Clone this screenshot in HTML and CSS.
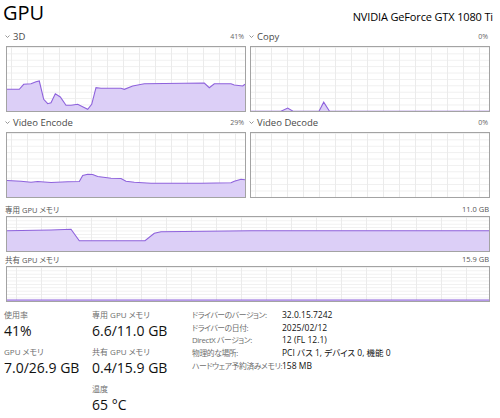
FILE: index.html
```html
<!DOCTYPE html>
<html lang="ja">
<head>
<meta charset="utf-8">
<title>GPU</title>
<link rel="stylesheet" href="styles.css">
</head>
<body>
<div class="page">
  <header class="top">
    <h1 class="title">GPU</h1>
    <div class="model">NVIDIA GeForce GTX 1080 Ti</div>
  </header>

  <div class="quad">
    <div class="cell">
      <div class="cell-head">
        <span class="name"><svg class="chev" width="5" height="3" viewBox="0 0 5 3"><polyline points="0.5,0.5 2.5,2.5 4.5,0.5" fill="none" stroke="#8a8a8a" stroke-width="0.9"/></svg>3D</span>
        <span class="pct">41%</span>
      </div>
      <div class="chart">
        <svg viewBox="0 0 238 64" preserveAspectRatio="none">
          <polygon class="area" points="0,42.3 12.3,42.3 16.7,37.3 24,36.7 29,34.7 32.3,34 36.7,52.3 40.7,56.7 44,55.7 48.3,46.7 53.3,50 59,58.3 64,58.3 70.7,57.3 80.7,62.3 84.7,57.3 89,40.7 94,41.3 114,41.3 117.3,42.3 125.7,39 137.3,36.7 197.3,36 202.3,40.7 207.3,36.7 224,36.7 227.3,38 235.7,39 238,37.3 238,64 0,64"/>
          <polyline class="line" points="0,42.3 12.3,42.3 16.7,37.3 24,36.7 29,34.7 32.3,34 36.7,52.3 40.7,56.7 44,55.7 48.3,46.7 53.3,50 59,58.3 64,58.3 70.7,57.3 80.7,62.3 84.7,57.3 89,40.7 94,41.3 114,41.3 117.3,42.3 125.7,39 137.3,36.7 197.3,36 202.3,40.7 207.3,36.7 224,36.7 227.3,38 235.7,39 238,37.3"/>
        </svg>
      </div>
    </div>
    <div class="cell">
      <div class="cell-head">
        <span class="name"><svg class="chev" width="5" height="3" viewBox="0 0 5 3"><polyline points="0.5,0.5 2.5,2.5 4.5,0.5" fill="none" stroke="#8a8a8a" stroke-width="0.9"/></svg>Copy</span>
        <span class="pct">0%</span>
      </div>
      <div class="chart">
        <svg viewBox="0 0 238 64" preserveAspectRatio="none">
          <polygon class="area" points="0,64 30,64 36.7,61 42,64 68,64 72.7,55.2 78.5,64 238,64"/>
          <polyline class="line" points="0,64.2 30,64.2 36.7,61 42,64.2 68,64.2 72.7,55.2 78.5,64.2 238,64.2"/>
        </svg>
      </div>
    </div>
    <div class="cell">
      <div class="cell-head">
        <span class="name"><svg class="chev" width="5" height="3" viewBox="0 0 5 3"><polyline points="0.5,0.5 2.5,2.5 4.5,0.5" fill="none" stroke="#8a8a8a" stroke-width="0.9"/></svg>Video Encode</span>
        <span class="pct">29%</span>
      </div>
      <div class="chart">
        <svg viewBox="0 0 238 64" preserveAspectRatio="none">
          <polygon class="area" points="0,47.5 14,48.2 24,49.2 30.7,48.5 44,49.5 60.7,48.8 72.3,48.5 75.7,42.5 80.7,41.2 85.7,41.5 90.7,43.5 104,45.2 114,45.5 119,48.2 127.3,49.2 144,50.2 194,50.2 224,49.8 227.3,48.2 234,46.2 238,46.8 238,64 0,64"/>
          <polyline class="line" points="0,47.5 14,48.2 24,49.2 30.7,48.5 44,49.5 60.7,48.8 72.3,48.5 75.7,42.5 80.7,41.2 85.7,41.5 90.7,43.5 104,45.2 114,45.5 119,48.2 127.3,49.2 144,50.2 194,50.2 224,49.8 227.3,48.2 234,46.2 238,46.8"/>
        </svg>
      </div>
    </div>
    <div class="cell">
      <div class="cell-head">
        <span class="name"><svg class="chev" width="5" height="3" viewBox="0 0 5 3"><polyline points="0.5,0.5 2.5,2.5 4.5,0.5" fill="none" stroke="#8a8a8a" stroke-width="0.9"/></svg>Video Decode</span>
        <span class="pct">0%</span>
      </div>
      <div class="chart"></div>
    </div>
  </div>

  <div class="mem">
    <div class="mem-head first">
      <span class="mem-name">専用 GPU メモリ</span>
      <span class="mem-max">11.0 GB</span>
    </div>
    <div class="chart mem-chart">
      <svg viewBox="0 0 482 34" preserveAspectRatio="none">
        <polygon class="area" points="0,13.7 44,13 64,12.3 72.3,23.7 138,23.7 147.3,16.3 154,14.7 244,13.7 482,13.7 482,34 0,34"/>
        <polyline class="line" points="0,13.7 44,13 64,12.3 72.3,23.7 138,23.7 147.3,16.3 154,14.7 244,13.7 482,13.7"/>
      </svg>
    </div>
    <div class="mem-head">
      <span class="mem-name">共有 GPU メモリ</span>
      <span class="mem-max">15.9 GB</span>
    </div>
    <div class="chart mem-chart">
      <svg viewBox="0 0 482 34" preserveAspectRatio="none">
        <polygon class="area" points="0,33 482,33 482,34 0,34"/>
        <polyline class="line" points="0,33 482,33"/>
      </svg>
    </div>
  </div>

  <div class="stats">
    <div class="stat-col">
      <div class="stat">
        <div class="stat-label">使用率</div>
        <div class="stat-value">41%</div>
      </div>
      <div class="stat">
        <div class="stat-label">GPU メモリ</div>
        <div class="stat-value">7.0/26.9 GB</div>
      </div>
    </div>
    <div class="stat-col">
      <div class="stat">
        <div class="stat-label">専用 GPU メモリ</div>
        <div class="stat-value">6.6/11.0 GB</div>
      </div>
      <div class="stat">
        <div class="stat-label">共有 GPU メモリ</div>
        <div class="stat-value">0.4/15.9 GB</div>
      </div>
      <div class="stat">
        <div class="stat-label">温度</div>
        <div class="stat-value">65 °C</div>
      </div>
    </div>
    <dl class="props">
      <dt>ドライバーのバージョン:</dt><dd>32.0.15.7242</dd>
      <dt>ドライバーの日付:</dt><dd>2025/02/12</dd>
      <dt>DirectX バージョン:</dt><dd>12 (FL 12.1)</dd>
      <dt>物理的な場所:</dt><dd>PCI バス 1, デバイス 0, 機能 0</dd>
      <dt>ハードウェア予約済みメモリ:</dt><dd>158 MB</dd>
    </dl>
  </div>
</div>
</body>
</html>
```

FILE: styles.css
```css
html, body {
  margin: 0;
  background: #ffffff;
}

body {
  font-family: "Open Sans", "Noto Sans CJK JP", sans-serif;
  color: #111111;
  font-feature-settings: "palt";
}

.page {
  width: 500px;
  height: 418px;
  padding: 0 10px 0 6px;
  box-sizing: border-box;
  overflow: hidden;
}

.top {
  display: flex;
  justify-content: space-between;
  align-items: flex-start;
  height: 26px;
}

.title {
  margin: 0 0 0 -3px;
  font-size: 20px;
  font-weight: 400;
  line-height: 26px;
  color: #000;
}

.model {
  font-size: 11px;
  line-height: 14px;
  margin-top: 10px;
  margin-right: -3px;
  letter-spacing: -0.15px;
  color: #000;
}

.quad {
  display: grid;
  grid-template-columns: 240px 240px;
  column-gap: 4px;
}

.cell-head {
  height: 20px;
  display: flex;
  align-items: center;
  justify-content: space-between;
}

.name {
  display: flex;
  align-items: center;
  gap: 3px;
  margin-left: -1px;
  font-size: 9.5px;
  color: #4a4a4a;
}

.chev {
  display: block;
}

.pct {
  font-size: 7px;
  color: #666;
  padding-right: 2px;
}

.chart {
  height: 66px;
  box-sizing: border-box;
  border: 1px solid #a3a3a3;
  background-color: #ffffff;
  background-image:
    linear-gradient(to right, #ebebeb 1px, transparent 1px),
    linear-gradient(to bottom, #efefef 1px, transparent 1px);
  background-size: 16px 100%, 100% 6.4px;
  background-position: 4px 0, 0 0;
}

.chart svg {
  display: block;
  width: 100%;
  height: 100%;
  overflow: hidden;
}

.area {
  fill: #dccff7;
}

.line {
  fill: none;
  stroke: #8e62dc;
  stroke-width: 1.1;
}

.mem-head {
  height: 14px;
  display: flex;
  align-items: center;
  justify-content: space-between;
  font-size: 7.5px;
  color: #555;
}

.mem-head.first {
  margin-top: 4px;
}

.mem-name {
  margin-left: -1px;
}

.mem-max {
  padding-right: 1px;
}

.mem-chart {
  height: 36px;
  background-size: 25px 100%, 100% 3.4px;
  background-position: 9px 0, 0 0;
}

.stats {
  display: grid;
  grid-template-columns: 88px 100px auto;
  margin: 6px 0 0 -2px;
}

.stat + .stat {
  margin-top: 4px;
}

.stat-label {
  font-size: 8px;
  line-height: 13px;
  color: #6e6e6e;
}

.stat-value {
  font-size: 14px;
  line-height: 20px;
  color: #111;
}

.props {
  margin: 0;
  display: grid;
  grid-template-columns: 90px auto;
  grid-auto-rows: 12.7px;
  align-items: center;
  font-size: 8.5px;
}

.props dt {
  font-size: 7.8px;
  letter-spacing: -0.4px;
  color: #6e6e6e;
  white-space: nowrap;
}

.props dd {
  margin: 0;
  color: #111;
  white-space: nowrap;
}
```
